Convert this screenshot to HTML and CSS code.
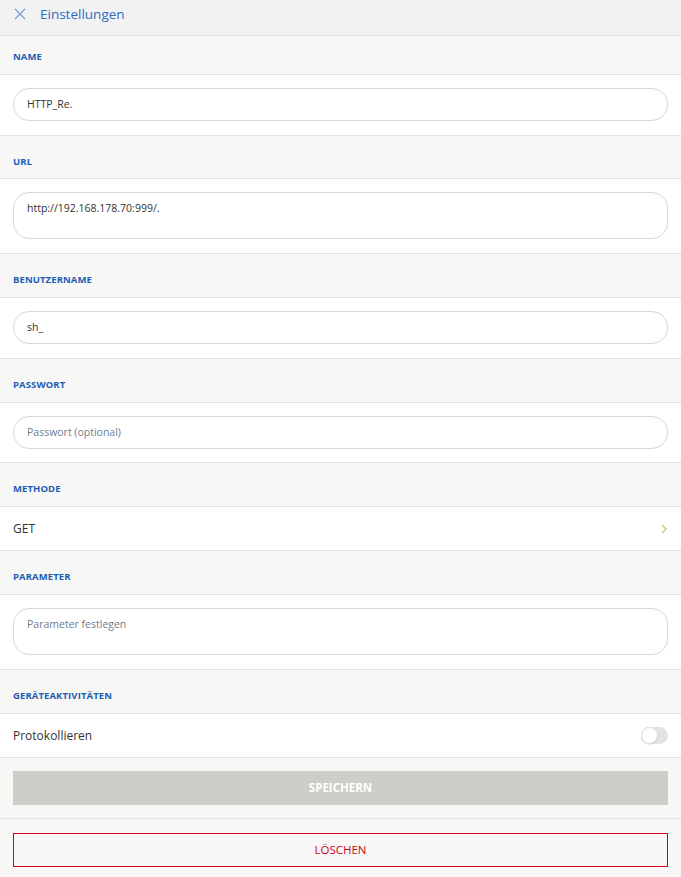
FILE: index.html
```html
<!DOCTYPE html>
<html lang="de">
<head>
<meta charset="utf-8">
<title>Einstellungen</title>
<link rel="stylesheet" href="styles.css">
</head>
<body>
<div class="page">
  <header class="topbar">
    <svg class="close" width="12" height="12" viewBox="0 0 12 12"><path d="M1 1 L11 11 M11 1 L1 11" stroke="#6f9ce0" stroke-width="1.1" fill="none"/></svg>
    <span class="title">Einstellungen</span>
  </header>

  <div class="label first">NAME</div>
  <div class="row field"><div class="input">HTTP_Re.</div></div>

  <div class="label short">URL</div>
  <div class="row field"><div class="input area">http://192.168.178.70:999/.</div></div>

  <div class="label">BENUTZERNAME</div>
  <div class="row field"><div class="input">sh_</div></div>

  <div class="label">PASSWORT</div>
  <div class="row field tight"><div class="input placeholder">Passwort (optional)</div></div>

  <div class="label">METHODE</div>
  <div class="row item"><span>GET</span>
    <svg class="chev" width="6" height="10" viewBox="0 0 6 10"><path d="M1 1 L5 5 L1 9" stroke="#a9d15c" stroke-width="1.2" fill="none"/></svg>
  </div>

  <div class="label">PARAMETER</div>
  <div class="row field"><div class="input area placeholder">Parameter festlegen</div></div>

  <div class="label">GERÄTEAKTIVITÄTEN</div>
  <div class="row item"><span>Protokollieren</span><span class="toggle"><span class="knob"></span></span></div>

  <div class="actions"><div class="btn save">SPEICHERN</div></div>
  <div class="actions last"><div class="btn delete">LÖSCHEN</div></div>
</div>
</body>
</html>
```
FILE: styles.css
```css
* { box-sizing: border-box; }
html, body { margin: 0; padding: 0; }
body {
  font-family: "Open Sans", "Noto Sans", sans-serif;
  background: #f7f7f5;
  color: #333;
}
.page { width: 681px; height: 877px; overflow: hidden; background: #f7f7f5; }
.topbar {
  height: 36px;
  background: #f2f2f2;
  border-bottom: 1px solid #e2e2e0;
  display: flex;
  align-items: center;
  padding: 0 0 8px 14px;
}
.close { margin-right: 14px; }
.title { color: #2e6dc2; font-size: 13.5px; }
.label {
  height: 44px;
  padding: 19px 13px 0;
  font-size: 9.5px;
  line-height: 13px;
  font-weight: 700;
  color: #1b5db4;
  letter-spacing: 0.1px;
  border-bottom: 1px solid #e4e4e2;
}
.label.first { height: 39px; padding-top: 14px; }
.label.short { height: 43px; }
.row { background: #fff; border-bottom: 1px solid #e4e4e2; }
.field { padding: 13px 13px 14px; }
.field.tight { padding-bottom: 13px; }
.input {
  height: 33px;
  border: 1px solid #d8d8d4;
  border-radius: 16px;
  padding: 0 13px;
  font-size: 10.5px;
  line-height: 31px;
  color: #333;
}
.input.area { height: 47px; line-height: 14px; padding-top: 8px; }
.input.placeholder { color: #6f7c8e; }
.item {
  height: 44px;
  display: flex;
  align-items: center;
  justify-content: space-between;
  padding: 0 13px;
  font-size: 12px;
  color: #333;
}
.chev { margin-right: 1px; }
.toggle {
  width: 27px; height: 17px;
  border-radius: 9px;
  background: #e3e3e1;
  position: relative;
}
.knob {
  position: absolute; left: 0; top: 0;
  width: 17px; height: 17px; border-radius: 50%;
  background: #fff;
  border: 1px solid #dcdcda;
  box-shadow: 0 1px 1px rgba(0,0,0,0.08);
}
.actions { padding: 13px 13px 13px; border-bottom: 1px solid #e4e4e2; }
.actions.last { border-bottom: none; padding-top: 14px; }
.btn {
  height: 34px;
  display: flex; align-items: center; justify-content: center;
  font-size: 11.5px;
  padding-bottom: 2px;
}
.save { background: #cfcdc8; color: #fff; font-weight: 700; }
.delete { border: 1px solid #d0021b; color: #d0021b; }
```
